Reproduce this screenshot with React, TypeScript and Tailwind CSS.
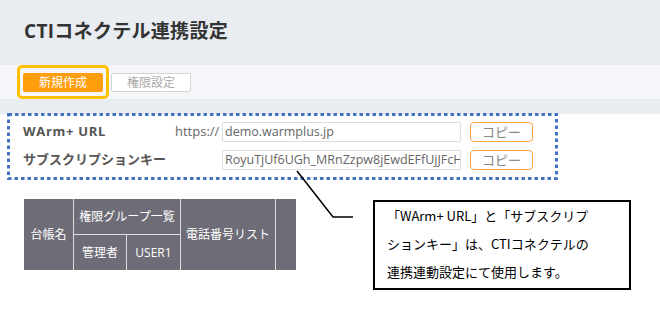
import React from "react";

export default function App() {
  return (
    <div className="relative w-[660px] h-[311px] overflow-hidden bg-white font-['Open_Sans','Noto_Sans_CJK_JP',sans-serif]">
      {/* header */}
      <div className="h-[65px] bg-[#e9ecf1] pl-[24px] pt-[18px]">
        <h1 className="text-[19px] leading-[26px] font-bold text-[#333] tracking-[0.3px]">CTIコネクテル連携設定</h1>
      </div>
      {/* toolbar */}
      <div className="h-[34px] bg-[#f5f6fa] flex items-center gap-[8px] pl-[23px] pt-[1px]">
        <button className="w-[80px] h-[19px] rounded-[2px] bg-[#ff9d0d] text-white text-[12px] leading-[19px]">新規作成</button>
        <button className="w-[80px] h-[19px] rounded-[2px] bg-white border border-[#d4d4d4] text-[#aaa] text-[12px] leading-[17px]">権限設定</button>
      </div>
      <div className="h-[15px] bg-[#e9ecf1]" />
      {/* content */}
      <div className="pl-[23px] pt-[8px]">
        <div className="flex flex-col gap-[8px]">
          <div className="flex items-center h-[20px]">
            <div className="w-[152px] text-[13px] font-bold text-[#555] tracking-[0.7px]">WArm+ URL</div>
            <div className="w-[47px] text-[13px] text-[#666]">https://</div>
            <div className="w-[239px] h-[20px] border border-[#ddd] rounded-[2px] pl-[2px] text-[12.5px] leading-[18px] text-[#666] overflow-hidden whitespace-nowrap">demo.warmplus.jp</div>
            <button className="ml-[9px] w-[63px] h-[20px] border border-[#f6a540] rounded-[4px] text-[13px] leading-[18px] text-[#888]">コピー</button>
          </div>
          <div className="flex items-center h-[20px]">
            <div className="w-[199px] text-[13px] font-bold text-[#555]">サブスクリプションキー</div>
            <div className="w-[239px] h-[20px] border border-[#ddd] rounded-[2px] pl-[2px] text-[12.5px] leading-[18px] text-[#666] overflow-hidden whitespace-nowrap">RoyuTjUf6UGh_MRnZzpw8jEwdEFfUjJFcHYw</div>
            <button className="ml-[9px] w-[63px] h-[20px] border border-[#f6a540] rounded-[4px] text-[13px] leading-[18px] text-[#888]">コピー</button>
          </div>
        </div>
        {/* table */}
        <div className="mt-[29px] ml-[1px] grid grid-cols-[49px_52px_53px_94px_20px] grid-rows-[35px_35px] gap-px bg-[#dcdcdc] w-[272px] text-white text-[12px]">
          <div className="row-span-2 bg-[#6e6c76] flex items-center justify-center">台帳名</div>
          <div className="col-span-2 bg-[#6e6c76] flex items-center justify-center">権限グループ一覧</div>
          <div className="row-span-2 bg-[#6e6c76] flex items-center justify-center">電話番号リスト</div>
          <div className="row-span-2 bg-[#6e6c76]" />
          <div className="bg-[#6e6c76] flex items-center justify-center">管理者</div>
          <div className="bg-[#6e6c76] flex items-center justify-center">USER1</div>
        </div>
      </div>

      {/* annotation overlays */}
      <div className="absolute left-[17px] top-[65px] w-[92px] h-[34px] border-[3px] border-[#ffc000] rounded-[5px]" />
      <svg className="absolute left-0 top-0" width="660" height="311">
        <rect x="8.5" y="114.5" width="548" height="64" fill="none" stroke="#4472c4" strokeWidth="3" strokeDasharray="3.5 3" />
        <polyline points="297,171 333,217 353,217" fill="none" stroke="#000" strokeWidth="1.5" />
      </svg>
      <div className="absolute left-[373px] top-[200px] w-[258px] h-[90px] border-2 border-black bg-white pl-[12px] text-[13px] leading-[28px] text-black font-['Noto_Sans_CJK_JP',sans-serif]">
        <div>「WArm+ URL」と「サブスクリプ</div>
        <div>ションキー」は、CTIコネクテルの</div>
        <div>連携連動設定にて使用します。</div>
      </div>
    </div>
  );
}
